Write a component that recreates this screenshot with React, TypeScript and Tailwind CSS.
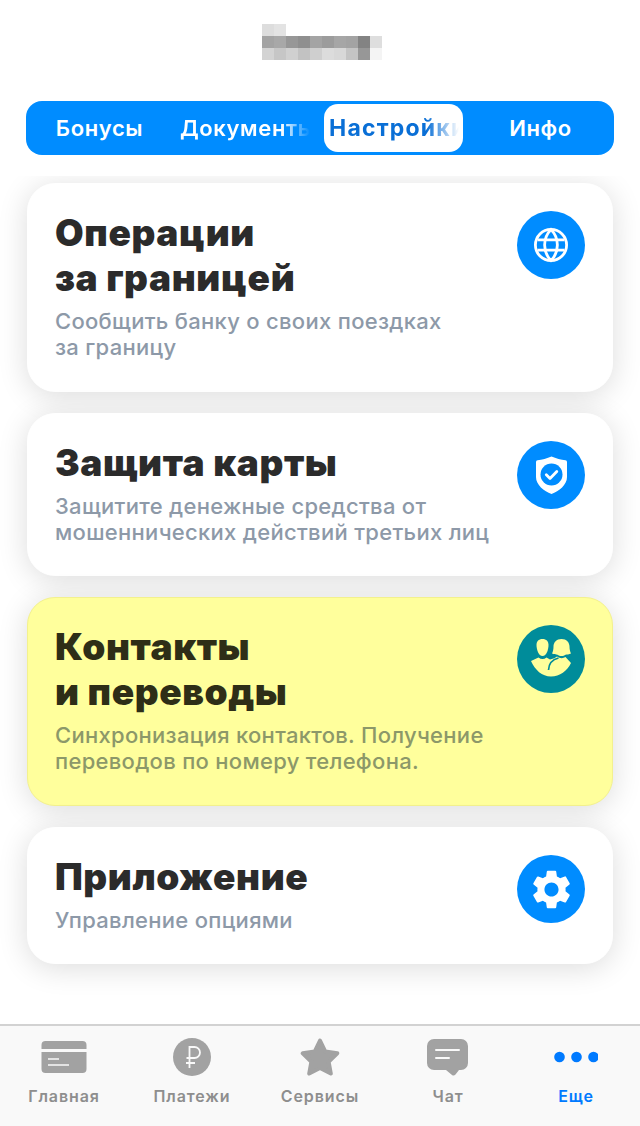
import { MdSettings } from "react-icons/md";

const mosaic: [number, number, string][] = [
  [0, 0, "#dddddd"], [1, 0, "#e3e3e3"],
  [0, 1, "#a3a3a3"], [1, 1, "#a8a8a8"], [2, 1, "#979797"], [3, 1, "#8f8f8f"], [4, 1, "#a4a4a4"], [5, 1, "#9c9c9c"], [6, 1, "#a6a6a6"], [7, 1, "#a3a3a3"], [8, 1, "#838383"], [9, 1, "#dedede"],
  [0, 2, "#d3d3d3"], [1, 2, "#c6c6c6"], [2, 2, "#d0d0d0"], [3, 2, "#c2c2c2"], [4, 2, "#cfcfcf"], [5, 2, "#dcdcdc"], [6, 2, "#d8d8d8"], [7, 2, "#c4c4c4"], [8, 2, "#979797"], [9, 2, "#f4f4f4"],
];

function Globe() {
  return (
    <svg width="36" height="36" viewBox="0 0 36 36" fill="none" stroke="#fff" strokeWidth="2.8">
      <circle cx="18" cy="18" r="15.6" />
      <path d="M18 2.400C9.500 11 9.500 25 18 33.600C26.500 25 26.500 11 18 2.400z" />
      <path d="M4.500 12.800h27M4.500 23.200h27" />
    </svg>
  );
}

function Shield() {
  return (
    <svg width="31" height="38" viewBox="0 0 31 38">
      <path d="M15.500 0.500C20 2.500 25 3.800 29.500 4.300Q31 4.500 31 6V21C31 29 23 35 15.500 38C8 35 0 29 0 21V6Q0 4.500 1.500 4.300C6 3.800 11 2.500 15.500 0.500Z" fill="#fff" />
      <circle cx="15.500" cy="18.500" r="11" fill="#008cff" />
      <path d="M10.300 18.800l3.700 3.700 6.800-7" fill="none" stroke="#fff" strokeWidth="2.800" strokeLinecap="round" strokeLinejoin="round" />
    </svg>
  );
}

function People() {
  return (
    <svg className="mb-[3px]" width="40" height="38" viewBox="0 0 40 38" fill="#ffff9c">
      <path d="M11.500 0c3.800 0 6 2.200 6 6 0 4.500-2 11-6 11S5.500 10.500 5.500 6c0-3.800 2.200-6 6-6z" />
      <path d="M30.500 0c5 0 8 3.500 8 7.500 0 2.800.5 5 1.500 7-2 .8-4 1.200-5.500 1.200-1 .8-2.500 1.300-4 1.300s-3-.5-4-1.300c-1.500 0-3.500-.4-5.500-1.200 1-2 1.500-4.200 1.500-7 0-4 3-7.500 8-7.500z" />
      <path d="M0 22L7.500 18.500Q11.500 21.500 15.500 18.500L19 20.500Q24 19.500 26 17.500Q30.500 20.500 34.500 18L40 24C36 32 29 37.500 20 37.500C11 37.500 4 31 0 22Z" />
      <path d="M27.500 19C21.500 20.500 17.800 24 17.500 31" fill="none" stroke="#008c9a" strokeWidth="1.700" />
    </svg>
  );
}

function Card({ title, text, yellow, icon }: { title: string[]; text: string[]; yellow?: boolean; icon: React.ReactNode }) {
  return (
    <div
      className={`flex justify-between rounded-[28px] border pl-[27px] pr-[27px] pt-[26px] shadow-[0_4px_30px_rgba(0,0,0,0.14)] ${
        title.length > 1 ? "pb-[31px]" : "pb-[30px]"
      } ${yellow ? "border-[#f3f18e] bg-[#ffff9c]" : "border-white bg-white"}`}
    >
      <div>
        <div className={`text-[37px] leading-[45px] font-black tracking-[0.6px] ${yellow ? "text-[#2e2e17]" : "text-[#2b2b2b]"}`}>
          {title.map((t) => (
            <div key={t}>{t}</div>
          ))}
        </div>
        <div className={`mt-[8px] text-[22px] leading-[26px] font-medium tracking-[0.3px] ${yellow ? "text-[#8c9869]" : "text-[#8d99a8]"}`}>
          {text.map((t) => (
            <div key={t}>{t}</div>
          ))}
        </div>
      </div>
      <div className={`mt-px flex h-[68px] w-[68px] shrink-0 items-center justify-center rounded-full ${yellow ? "bg-[#008c9a]" : "bg-[#008cff]"}`}>
        {icon}
      </div>
    </div>
  );
}

function NavItem({ label, active, children }: { label: string; active?: boolean; children: React.ReactNode }) {
  return (
    <div className="flex w-[128px] flex-col items-center">
      <div className="flex h-[40px] items-center justify-center">{children}</div>
      <div className={`mt-[9px] text-[16px] leading-[20px] font-semibold tracking-[0.9px] ${active ? "text-[#007aff]" : "text-[#8e8e8e]"}`}>{label}</div>
    </div>
  );
}

export default function App() {
  return (
    <div className="flex h-[1126px] w-[640px] flex-col overflow-hidden bg-white font-['Inter','Noto_Sans',sans-serif]">
      <div className="h-[176px] shrink-0 pt-[24px]">
        <svg className="ml-[262px]" width="120" height="36" viewBox="0 0 120 36" shapeRendering="crispEdges">
          {mosaic.map(([x, y, c]) => (
            <rect key={`${x}-${y}`} x={x * 12} y={y * 12} width="12" height="12" fill={c} />
          ))}
        </svg>
        <div className="mx-[26px] mt-[41px] flex h-[54px] gap-2 rounded-[16px] bg-[#008cff] px-1 py-[3px] text-[22px] leading-[48px] font-semibold tracking-[0.6px] text-white">
          <div className="w-[139px] text-center">Бонусы</div>
          <div className="w-[139px] pl-[3px] pr-[6px]">
            <div className="overflow-hidden whitespace-nowrap [mask-image:linear-gradient(to_right,#000_78%,transparent_100%)]">Документы</div>
          </div>
          <div className="w-[139px] rounded-[14px] bg-white pl-[5px] pr-[4px]">
            <div className="overflow-hidden text-[23px] font-bold tracking-[1.2px] whitespace-nowrap text-[#0a6fd6] [mask-image:linear-gradient(to_right,#000_75%,transparent_100%)]">Настройки</div>
          </div>
          <div className="w-[139px] text-center">Инфо</div>
        </div>
      </div>

      <div className="flex flex-1 flex-col gap-[21px] overflow-hidden px-[27px] pt-[7px]">
        <Card title={["Операции", "за границей"]} text={["Сообщить банку о своих поездках", "за границу"]} icon={<Globe />} />
        <Card title={["Защита карты"]} text={["Защитите денежные средства от", "мошеннических действий третьих лиц"]} icon={<Shield />} />
        <Card yellow title={["Контакты", "и переводы"]} text={["Синхронизация контактов. Получение", "переводов по номеру телефона."]} icon={<People />} />
        <Card title={["Приложение"]} text={["Управление опциями"]} icon={<MdSettings size={47} color="#fff" />} />
      </div>

      <div className="flex h-[102px] shrink-0 border-t-2 border-[#d2d2d2] bg-[#f9f9f9] pt-[11px]">
        <NavItem label="Главная">
          <svg width="46" height="32" viewBox="0 0 46 32">
            <path fill="#a2a2a2" d="M0.500 8V4a4 4 0 014-4h37a4 4 0 014 4v4zM0.500 11h45v17a4 4 0 01-4 4h-37a4 4 0 01-4-4z" />
            <path stroke="#f9f9f9" strokeWidth="1.500" d="M7 18h11M7 24h21" />
          </svg>
        </NavItem>
        <NavItem label="Платежи">
          <svg width="38" height="38" viewBox="0 0 38 38">
            <circle cx="19" cy="19" r="19" fill="#a2a2a2" />
            <path fill="none" stroke="#f9f9f9" strokeWidth="1.800" d="M16.500 30V9h5a5.500 5.500 0 010 11h-8M13 25h9" />
          </svg>
        </NavItem>
        <NavItem label="Сервисы">
          <svg width="40" height="38" viewBox="0 0 40 38">
            <path fill="#a2a2a2" stroke="#a2a2a2" strokeWidth="4" strokeLinejoin="round" d="M20 2.500l5.300 11 12 1.800-8.700 8.400 2.200 11.800L20 30l-10.800 5.500 2.200-11.800-8.700-8.400 12-1.800z" />
          </svg>
        </NavItem>
        <NavItem label="Чат">
          <svg width="42" height="38" viewBox="0 0 42 38">
            <path fill="#a2a2a2" d="M7 1h27a7 7 0 017 7v17a7 7 0 01-7 7h-2l-3.500 4.500c-1 1.200-2.300 1.400-3.500.500L19 32H7a7 7 0 01-7-7V8a7 7 0 017-7z" />
            <path stroke="#f9f9f9" strokeWidth="2" strokeLinecap="round" d="M9 12h23M9 20h13" />
          </svg>
        </NavItem>
        <NavItem label="Еще" active>
          <svg width="44" height="12" viewBox="0 0 44 12">
            <circle cx="5.500" cy="6" r="5.300" fill="#007aff" />
            <circle cx="22.500" cy="6" r="5.300" fill="#007aff" />
            <circle cx="39.500" cy="6" r="5.300" fill="#007aff" />
          </svg>
        </NavItem>
      </div>
    </div>
  );
}
